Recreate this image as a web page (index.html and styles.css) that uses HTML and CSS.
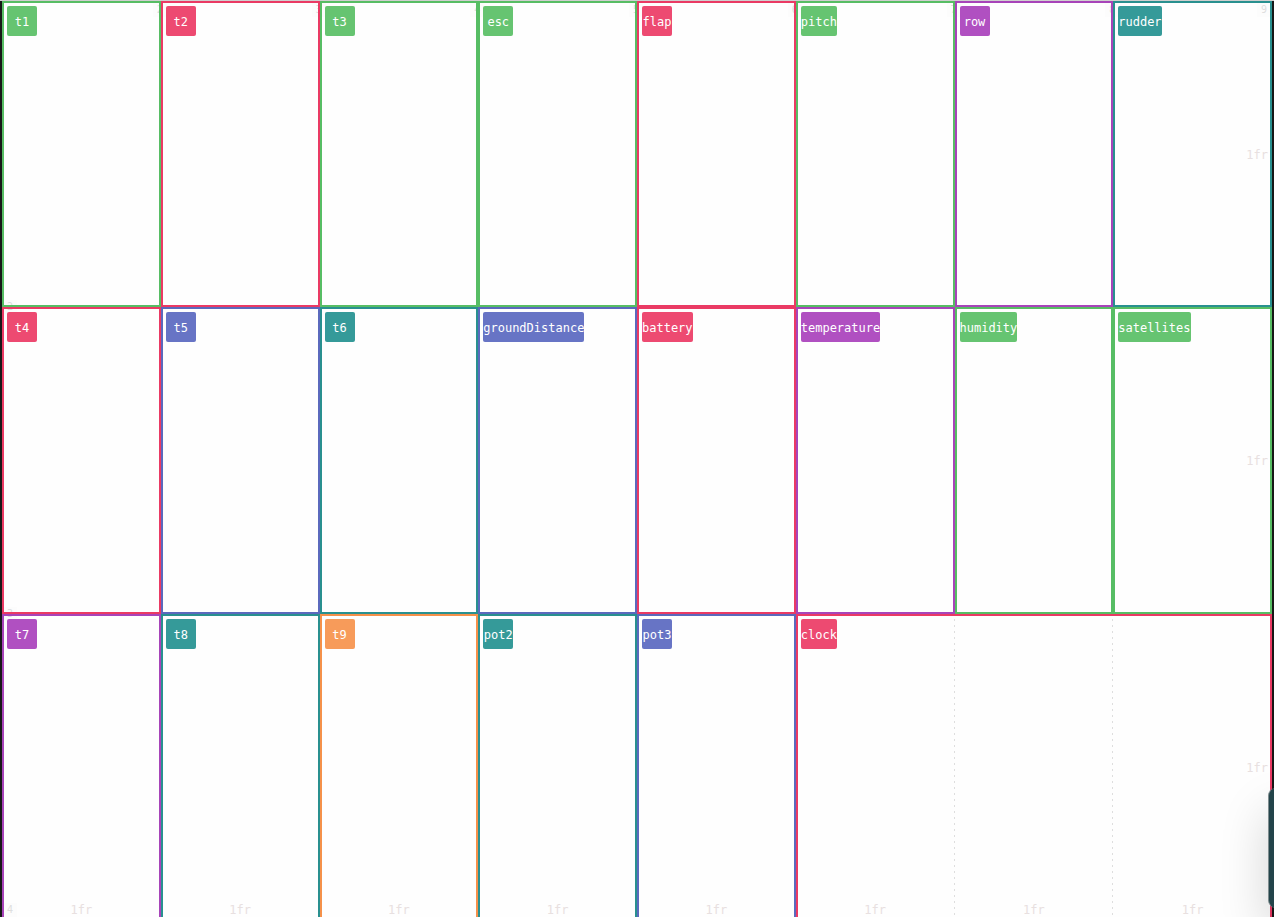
FILE: index.html
```html
<!DOCTYPE html>
<html lang="en">
<head>
<meta charset="utf-8">
<title>Grid areas</title>
<link rel="stylesheet" href="styles.css">
</head>
<body>
<main class="stage">
  <div class="board">
    <div class="columns">
      <div class="column"><span class="line-no">2</span><span class="track">1fr</span></div>
      <div class="column"><span class="line-no">3</span><span class="track">1fr</span></div>
      <div class="column"><span class="line-no">4</span><span class="track">1fr</span></div>
      <div class="column"><span class="line-no">5</span><span class="track">1fr</span></div>
      <div class="column"><span class="line-no">6</span><span class="track">1fr</span></div>
      <div class="column dashed"><span class="line-no">7</span><span class="track">1fr</span></div>
      <div class="column dashed"><span class="line-no">8</span><span class="track">1fr</span></div>
      <div class="column last"><span class="line-no">9</span><span class="track">1fr</span></div>
    </div>
    <div class="rows">
      <div class="row"><span class="line-no">2</span><span class="track">1fr</span></div>
      <div class="row"><span class="line-no">3</span><span class="track">1fr</span></div>
      <div class="row last"><span class="line-no">4</span><span class="track">1fr</span></div>
    </div>
    <div class="areas">
      <section class="area green"><span class="tag">t1</span></section>
      <section class="area red"><span class="tag">t2</span></section>
      <section class="area green"><span class="tag">t3</span></section>
      <section class="area green"><span class="tag">esc</span></section>
      <section class="area red"><span class="tag">flap</span></section>
      <section class="area green"><span class="tag">pitch</span></section>
      <section class="area purple"><span class="tag">row</span></section>
      <section class="area teal"><span class="tag">rudder</span></section>
      <section class="area red"><span class="tag">t4</span></section>
      <section class="area blue"><span class="tag">t5</span></section>
      <section class="area teal"><span class="tag">t6</span></section>
      <section class="area blue"><span class="tag">groundDistance</span></section>
      <section class="area red"><span class="tag">battery</span></section>
      <section class="area purple"><span class="tag">temperature</span></section>
      <section class="area green"><span class="tag">humidity</span></section>
      <section class="area green"><span class="tag">satellites</span></section>
      <section class="area purple"><span class="tag">t7</span></section>
      <section class="area teal"><span class="tag">t8</span></section>
      <section class="area orange"><span class="tag">t9</span></section>
      <section class="area teal"><span class="tag">pot2</span></section>
      <section class="area blue"><span class="tag">pot3</span></section>
      <section class="area red wide"><span class="tag">clock</span></section>
    </div>
  </div>
  <aside class="drawer" aria-label="Side panel"></aside>
</main>
</body>
</html>
```
FILE: styles.css
```css
* {
  box-sizing: border-box;
}

body {
  margin: 0;
  overflow: hidden;
  background: #171717;
  font-family: "DejaVu Sans Mono", "Liberation Mono", monospace;
  font-size: 12px;
  line-height: 14px;
}

.stage {
  position: relative;
  height: 100vh;
  padding: 0 2px;
  border-top: 1px solid #cfcfcf;
  overflow: hidden;
}

.board {
  display: grid;
  height: calc(100vh + 2px);
  background: #fefefe;
}

.columns,
.rows,
.areas {
  grid-area: 1 / 1;
  display: grid;
  min-width: 0;
  min-height: 0;
}

.columns {
  grid-template-columns: repeat(8, minmax(0, 1fr));
}

.rows {
  grid-template-rows: repeat(3, minmax(0, 1fr));
}

.areas {
  position: relative;
  grid-template-columns: repeat(8, minmax(0, 1fr));
  grid-template-rows: repeat(3, minmax(0, 1fr));
}

.column {
  display: flex;
  flex-direction: column;
  justify-content: space-between;
  align-items: center;
  padding: 2px 0 3px;
}

.dashed {
  background: repeating-linear-gradient(#dedede 0 2px, transparent 2px 6px) right / 1px 100% no-repeat;
}

.row {
  display: flex;
  justify-content: space-between;
  align-items: center;
  padding: 2px 4px 0 1px;
}

.track {
  color: #e8e0e0;
}

.line-no {
  flex: none;
  width: 14px;
  background: #fcfcfc;
  color: #dedede;
  font-size: 10px;
  text-align: center;
}

.column .line-no {
  align-self: flex-end;
  margin-right: -6px;
}

.column.last .line-no {
  margin-right: 1px;
}

.row .line-no {
  align-self: flex-end;
  margin-bottom: -7px;
}

.row.last .line-no {
  margin-bottom: 3px;
}

.area {
  display: flex;
  align-items: flex-start;
  padding: 3px;
  border: 2px solid var(--line);
}

.tag {
  min-width: 30px;
  height: 30px;
  border-radius: 2px;
  background: var(--fill);
  color: #fff;
  line-height: 32px;
  text-align: center;
}

.wide {
  grid-column: span 3;
}

.green {
  --line: #57bd64;
  --fill: #66c471;
}

.red {
  --line: #ea3a64;
  --fill: #ed4a71;
}

.purple {
  --line: #a744b9;
  --fill: #b050c1;
}

.teal {
  --line: #29908f;
  --fill: #359a99;
}

.blue {
  --line: #5b69bd;
  --fill: #6774c5;
}

.orange {
  --line: #f5914a;
  --fill: #f79b5a;
}

.drawer {
  position: absolute;
  right: -34px;
  bottom: 9px;
  width: 40px;
  height: 120px;
  border-left: 1px solid #7f8d8f;
  border-radius: 8px;
  background: #23444a;
  box-shadow: 0 24px 48px rgba(0, 0, 0, 0.18);
}
```
